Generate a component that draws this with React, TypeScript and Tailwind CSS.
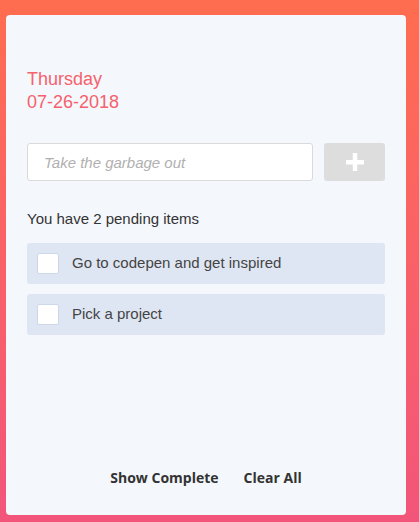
import React from "react";

export default function App() {
  return (
    <div className="h-[522px] w-full bg-gradient-to-b from-[#ff6d4f] to-[#f2557a] pt-[15px] px-[6px] pb-[7px]" style={{ fontFamily: '"Liberation Sans", Arial, sans-serif' }}>
      <div className="flex h-[500px] w-[400px] flex-col rounded-[4px] bg-[#f4f7fc] px-[21px] pt-[53px]">
        <div className="text-[18px] leading-[23px] text-[#f6616b]">
          <div>Thursday</div>
          <div>07-26-2018</div>
        </div>
        <div className="mt-[29px] flex gap-[11px]">
          <input
            className="h-[38px] flex-1 rounded-[3px] border border-[#dadada] bg-white pl-[16px] text-[15px] italic text-[#555] placeholder:text-[#b0b0b0] outline-none"
            placeholder="Take the garbage out"
          />
          <button className="flex h-[38px] w-[61px] items-center justify-center rounded-[3px] bg-[#dddddd]">
            <svg width="18" height="18" viewBox="0 0 18 18">
              <rect x="0" y="7" width="18" height="4.5" fill="#fff" />
              <rect x="6.75" y="0" width="4.5" height="18" fill="#fff" />
            </svg>
          </button>
        </div>
        <div className="mt-[28px] text-[15px] leading-[20px] text-[#333]">You have 2 pending items</div>
        <div className="mt-[14px] flex flex-col gap-[10px]">
          {["Go to codepen and get inspired", "Pick a project"].map((t) => (
            <div key={t} className="flex h-[41px] items-center rounded-[3px] bg-[#dfe6f3] pl-[10px]">
              <div className="h-[21px] w-[22px] rounded-[2px] border border-[#cdd8ea] bg-white" />
              <span className="ml-[13px] text-[15px] text-[#444]">{t}</span>
            </div>
          ))}
        </div>
        <div className="mt-auto flex justify-center gap-[25px] pb-[27px] text-[14px] font-bold leading-[20px] text-[#333]" style={{ fontFamily: '"Open Sans", sans-serif' }}>
          <span>Show Complete</span>
          <span>Clear All</span>
        </div>
      </div>
    </div>
  );
}
